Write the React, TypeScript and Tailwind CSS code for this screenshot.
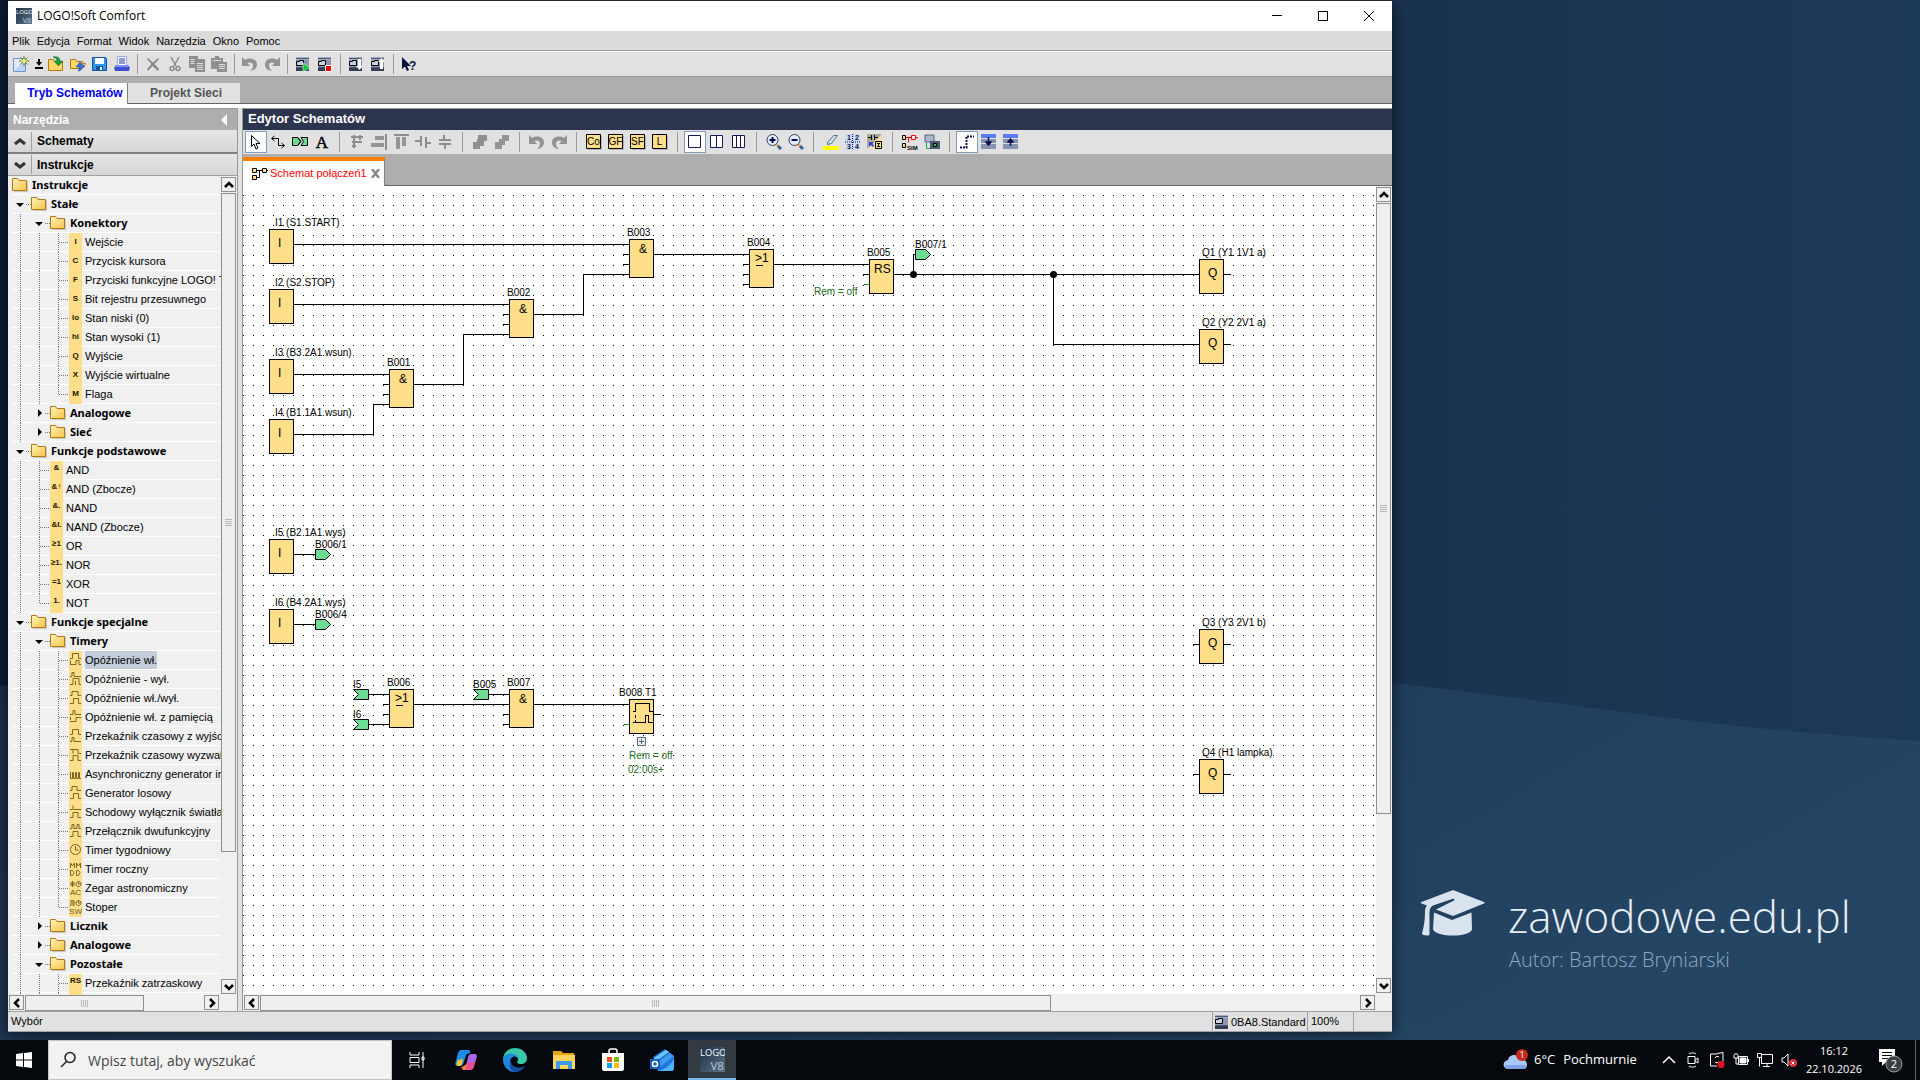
import type { ReactNode } from 'react'

// ─── Icons (16x16 grid) ───────────────────────────────────────────────────────
const Folder = () => (
  <svg width="16" height="15" viewBox="0 0 16 15" className="shrink-0" aria-hidden>
    <path d="M2 3h14v11H2z" fill="#c9c9c9" />
    <path d="M.5 12.500V.5h5l1.500 2h7.500v10z" fill="url(#folderFill)" stroke="#b07a10" />
  </svg>
)

const deviceBody = (
  <>
    <path d="M1 1h13v14H1z" fill="#4d5972" />
    <path d="M1 1h13v1H1zM1 3h13v1H1z" fill="#a4aec4" />
    <path d="M1 4h13v7H1z" fill="#8b96ae" />
    <path d="M1 12h13v3H1z" fill="#343d52" />
    <path d="M1.500 5.500h3v-1h4v5h-7z" fill="#c7cfdf" stroke="#000" />
  </>
)

const undoPath = 'M0 1v9h8L5.500 7c3-1.500 6 0 5.500 3.500-.2 1.500-1.500 3-3 4.500 4-.5 7-3 7-6.500C15 3 8 1 3 4z'

const codeBox = (text: string) => (
  <>
    <path d="M2 2h14v14H2z" fill="#b5b5b5" />
    <path d="M.5.5h14v14H.5z" fill="#ffde8a" stroke="#000" />
    <text x="7.500" y="11" fontSize="10" textAnchor="middle" fontFamily="Liberation Sans, sans-serif">{text}</text>
  </>
)

const ICONS: Record<string, ReactNode> = {
  new: (
    <>
      <path d="M.5 2.500h12v13H.5z" fill="#dfe9fb" stroke="#6f93d0" />
      <path d="M2 14 12 4v11H2z" fill="#bcd2f5" />
      <path d="M11 0v10M6 5h10M7.500 1.500l7 7M14.500 1.500l-7 7" stroke="#5d7a2e" />
      <path d="M11 2l1 2 2 1-2 1-1 2-1-2-2-1 2-1z" fill="#ffff5a" />
    </>
  ),
  open: (
    <>
      <path d="M.5 14.500v-11h5l1 2h8v9z" fill="#ffd867" stroke="#b07a10" />
      <path d="M5 1c5-1 7 1 7 4h3l-4.500 5L6 5h3C9 3 8 2 5 1z" fill="#1c9a38" stroke="#0f6f25" strokeWidth=".5" />
    </>
  ),
  folderUp: (
    <>
      <path d="M.5 12.500v-9h5l1 2h6v2h3l-3 5z" fill="#ffd867" stroke="#b07a10" />
      <path d="M10 6l5 5h-3c0 3-2 4-4 4 1-1 1-2 1-4H6z" fill="#3a67e0" stroke="#2348b5" strokeWidth=".5" />
    </>
  ),
  save: (
    <>
      <path d="M.5 1.500h13l1 1v12H.5z" fill="#2f95e8" stroke="#124ea3" />
      <path d="M3 2h9v6H3z" fill="#f4fbff" />
      <path d="M4 10h7v5H4z" fill="#0f55a0" />
      <path d="M8 11h2v3H8z" fill="#fff" />
    </>
  ),
  print: (
    <>
      <path d="M3.500.5h9v9h-9z" fill="#fff" stroke="#9aa4d8" />
      <path d="M5 3h6M5 5h6M5 7h6" stroke="#2434a0" />
      <path d="M1 9h14v3H1z" fill="#7d92f0" />
      <path d="M0 11h16l-1 4H1z" fill="#3b4fd0" />
    </>
  ),
  close: <path d="M3 2l5 4.500L13 2l1 1-4.500 5 4.500 5-1 2-5.500-5L3 15l-1-2 4.500-5L2 3z" fill="#8a8a8a" />,
  cut: (
    <>
      <path d="M4 1l5 9M12 1l-5 9" stroke="#8a8a8a" strokeWidth="1.500" />
      <circle cx="5" cy="12.500" r="2" fill="none" stroke="#8a8a8a" strokeWidth="1.500" />
      <circle cx="11" cy="12.500" r="2" fill="none" stroke="#8a8a8a" strokeWidth="1.500" />
    </>
  ),
  copy: (
    <>
      <path d="M0 0h9v12H0zM6 3h10v13H6z" fill="#8f8f8f" />
      <path d="M1.500 3.500h4M1.500 5.500h4M1.500 7.500h4M8 7.500h6M8 9.500h6M8 11.500h6M8 13.500h6" stroke="#dedede" />
    </>
  ),
  paste: (
    <>
      <path d="M0 2h4V0h4v2h4v11H0zM6 6h10v10H6z" fill="#8f8f8f" />
      <path d="M2 4.500h8M8 8.500h6M8 10.500h6M8 12.500h6" stroke="#dedede" />
    </>
  ),
  undo: <path d={undoPath} fill="#929292" />,
  redo: <path d={undoPath} fill="#929292" transform="matrix(-1 0 0 1 16 0)" />,
  start: <>{deviceBody}<path d="M8 7l7 4.500L8 16z" fill="#0fc93f" stroke="#fff" strokeWidth=".5" /></>,
  stop: <>{deviceBody}<path d="M8.500 9.500h6v6h-6z" fill="#f00" stroke="#fff" /></>,
  download: <>{deviceBody}<path d="M10 3h3v7h2l-3.500 4L8 10h2z" fill="#fff" /></>,
  upload: <>{deviceBody}<path d="M10 13h3V6h2l-3.500-4L8 6h2z" fill="#fff" /></>,
  help: (
    <>
      <path d="M1 1v12l3-2.500L6 15l2-1-2-4h4z" fill="#0a0f3c" />
      <text x="8" y="14" fontSize="12" fontWeight="700" fill="#0a0f3c" fontFamily="Liberation Sans, sans-serif">?</text>
    </>
  ),
  pointer: <path d="M3.500 1.500v11l2.500-2.500 2 5 2-1-2-4.500h4z" fill="#fff" stroke="#000" />,
  link: <path d="M2 4.500h6.500v7H14M4.500 2L1.500 4.500l3 2.500M11.500 9l3 2.500-3 2.500" fill="none" stroke="#000" />,
  cutLink: (
    <>
      <path d="M.5 3.500h5l3 4-3 4h-5zM9 3.500h6.500v8H9l2.500-4z" fill="#6cdc92" stroke="#000" />
      <path d="M6 3.500l3 4-3 4" fill="none" stroke="#000" />
    </>
  ),
  text: <text x="8" y="14" fontSize="17" textAnchor="middle" stroke="#000" strokeWidth=".5" fontFamily="Liberation Serif, serif">A</text>,
  alignLeft: <path d="M2 3h12M3 8h10M5 1v13M3 12h4M11 1v5" stroke="#8d8d8d" strokeWidth="2" />,
  alignRight: <path d="M15 0v15" stroke="#8d8d8d" strokeWidth="2" />,
  alignTop: (
    <>
      <path d="M1 1h15" stroke="#8d8d8d" strokeWidth="2" />
      <path d="M3 3h4v12H3zM9 3h4v9H9z" fill="#959595" />
    </>
  ),
  spaceH: <path d="M0 7h6M11 9h5M6 2v10M11 3v11" stroke="#8d8d8d" strokeWidth="2" />,
  spaceV: <path d="M7 1v5M8 10v5M2 6h12M2 10h12" stroke="#8d8d8d" strokeWidth="2" />,
  front: <path d="M6 1h9v6h-3v5H8v3H1V8h4V5h1z" fill="#8f8f8f" />,
  back: <path d="M8 1h7v6h-4v4H8v4H1V8h4V5h3z" fill="#959595" />,
  co: codeBox('Co'),
  gf: codeBox('GF'),
  sf: codeBox('SF'),
  l: codeBox('L'),
  win1: <path d="M1.500 1.500h12v12h-12z" fill="#fff" stroke="#1a1a50" />,
  win2: <path d="M1.500 1.500h12v12h-12zM7.500 1.500v12" fill="#fff" stroke="#1a1a50" />,
  win3: <path d="M1.500 1.500h12v12h-12zM5.500 1.500v12M9.500 1.500v12" fill="#fff" stroke="#1a1a50" />,
  zoomIn: (
    <>
      <path d="M10 10l2 2" stroke="#e8a33a" strokeWidth="2.500" />
      <path d="M12 12l3 3" stroke="#34609f" strokeWidth="3" />
      <circle cx="6.500" cy="6" r="5.500" fill="#e4ebf8" stroke="#3a3a66" />
      <path d="M6.500 3v6M3.500 6h6" stroke="#0a0f50" strokeWidth="2" />
    </>
  ),
  zoomOut: (
    <>
      <path d="M10 10l2 2" stroke="#e8a33a" strokeWidth="2.500" />
      <path d="M12 12l3 3" stroke="#34609f" strokeWidth="3" />
      <circle cx="6.500" cy="6" r="5.500" fill="#e4ebf8" stroke="#3a3a66" />
      <path d="M3.500 6h6" stroke="#0a0f50" strokeWidth="2" />
    </>
  ),
  marker: (
    <>
      <path d="M0 12h16v4H0z" fill="#ff0" />
      <path d="M4.500 8.500l6-7h4l-6 8-4 1z" fill="#cfe0ee" stroke="#5a6f80" />
    </>
  ),
  pages: (
    <>
      <path d="M0 0h15v16H0z" fill="#cbdcf8" />
      <path d="M7.500 0v16M0 8h15" stroke="#101040" strokeDasharray="1 1" />
      <g fontSize="7" fontWeight="700" fill="#101040" fontFamily="Liberation Sans, sans-serif">
        <text x="2" y="6">1</text>
        <text x="10" y="6">2</text>
        <text x="2" y="15">3</text>
        <text x="10" y="15">4</text>
      </g>
    </>
  ),
  convert: (
    <>
      <path d="M0 0h15v15H0z" fill="#f6dcae" />
      <path d="M0 0h15L0 15z" fill="#a9aa98" />
      <path d="M1 3.500h3M4.500 1v5M7.500 1v5M8 3.500h3" stroke="#000" />
      <path d="M8.500 7.500h6v7h-6zM10 9.500h3M11.500 9.500v3M10 12.500h3" fill="#ffde8a" stroke="#000" />
      <path d="M2 8h5L5.500 9.500 7 12l-1 1-2-2-2 2z" fill="#3044e0" />
    </>
  ),
  sim: (
    <>
      <path d="M.5 1.500h3v4h-3zM.5 9.500h3v4h-3z" fill="#ffde8a" stroke="#000" />
      <path d="M4 3.500h5M6.500 3.500v5M9.500 1.500h4v4h-4zM13.500 3.500H16" fill="#fff" stroke="#f00" />
      <text x="5" y="16" fontSize="6" fontWeight="700" fontFamily="Liberation Sans, sans-serif">SIM</text>
    </>
  ),
  online: (
    <>
      <path d="M1 1h9v7H1z" fill="#a9b6cc" stroke="#56627a" />
      <path d="M6 7h10v8H6z" fill="#4c5872" />
      <path d="M9.500 9.500h3v3h-3z" fill="#0fd93f" stroke="#000" />
      <path d="M2.500 9v5.500H6" stroke="#12a53a" fill="none" />
    </>
  ),
  steps: <path d="M1 13.500h6.500v-11H15" fill="none" stroke="#0a0f50" strokeWidth="2" strokeDasharray="2 1" />,
  rowDown: (
    <>
      <path d="M0 0h15v4H0z" fill="#5d7bf0" />
      <path d="M0 5h15v4H0zM0 10h15v5H0z" fill="#8793b0" />
      <path d="M7.500 3v6M5 8h5l-2.500 3z" stroke="#0a0f50" fill="#0a0f50" strokeWidth="1.500" />
    </>
  ),
  rowUp: (
    <>
      <path d="M0 0h15v4H0z" fill="#5d7bf0" />
      <path d="M0 5h15v4H0zM0 10h15v5H0z" fill="#8793b0" />
      <path d="M7.500 12V6M5 8h5L7.500 5z" stroke="#0a0f50" fill="#0a0f50" strokeWidth="1.500" />
    </>
  ),
}

ICONS.alignRight = (
  <>
    <path d="M14 0h2v16h-2z" fill="#8d8d8d" />
    <path d="M4 2h9v4H4zM0 9h13v4H0z" fill="#959595" />
  </>
)

function LogoMark({ size }: { size: number }) {
  return (
    <svg width={size} height={size} viewBox="0 0 24 24" aria-hidden className="shrink-0">
      <rect width="24" height="24" fill="url(#logoFill)" />
      <g fontFamily="Open Sans, sans-serif">
        <text x="0" y="9" fontSize="9" fill="#fff">LOGO</text>
        <text x="10" y="22" fontSize="11" fill="#b9c7d3">V8</text>
      </g>
    </svg>
  )
}

// ─── Toolbars ─────────────────────────────────────────────────────────────────
type Tool = { icon: string; label: string; active?: boolean }

const FILE_TOOLS: Tool[][] = [
  [
    { icon: 'open', label: 'Otwórz' },
    { icon: 'folderUp', label: 'Zamknij' },
    { icon: 'save', label: 'Zapisz' },
    { icon: 'print', label: 'Drukuj' },
  ],
  [
    { icon: 'close', label: 'Usuń' },
    { icon: 'cut', label: 'Wytnij' },
    { icon: 'copy', label: 'Kopiuj' },
    { icon: 'paste', label: 'Wklej' },
  ],
  [
    { icon: 'undo', label: 'Cofnij' },
    { icon: 'redo', label: 'Ponów' },
  ],
  [
    { icon: 'start', label: 'Uruchom LOGO!' },
    { icon: 'stop', label: 'Zatrzymaj LOGO!' },
  ],
  [
    { icon: 'download', label: 'PC do LOGO!' },
    { icon: 'upload', label: 'LOGO! do PC' },
  ],
  [{ icon: 'help', label: 'Pomoc kontekstowa' }],
]

const EDITOR_TOOLS: Tool[][] = [
  [
    { icon: 'pointer', label: 'Wybór', active: true },
    { icon: 'link', label: 'Połącz' },
    { icon: 'cutLink', label: 'Rozetnij połączenie' },
    { icon: 'text', label: 'Tekst' },
  ],
  [
    { icon: 'alignLeft', label: 'Wyrównaj automatycznie' },
    { icon: 'alignRight', label: 'Wyrównaj w pionie' },
    { icon: 'alignTop', label: 'Wyrównaj w poziomie' },
    { icon: 'spaceH', label: 'Rozmieść w poziomie' },
    { icon: 'spaceV', label: 'Rozmieść w pionie' },
  ],
  [
    { icon: 'front', label: 'Na wierzch' },
    { icon: 'back', label: 'Na spód' },
  ],
  [
    { icon: 'undo', label: 'Cofnij' },
    { icon: 'redo', label: 'Ponów' },
  ],
  [
    { icon: 'co', label: 'Stałe' },
    { icon: 'gf', label: 'Funkcje podstawowe' },
    { icon: 'sf', label: 'Funkcje specjalne' },
    { icon: 'l', label: 'Rejestrowanie' },
  ],
  [
    { icon: 'win1', label: 'Jedno okno', active: true },
    { icon: 'win2', label: 'Dwa okna' },
    { icon: 'win3', label: 'Trzy okna' },
  ],
  [
    { icon: 'zoomIn', label: 'Powiększ' },
    { icon: 'zoomOut', label: 'Pomniejsz' },
  ],
  [
    { icon: 'marker', label: 'Zaznacz' },
    { icon: 'pages', label: 'Układ stron' },
    { icon: 'convert', label: 'Konwertuj' },
  ],
  [
    { icon: 'sim', label: 'Symulacja' },
    { icon: 'online', label: 'Test online' },
  ],
  [
    { icon: 'steps', label: 'Linie', active: true },
    { icon: 'rowDown', label: 'Rozwiń' },
    { icon: 'rowUp', label: 'Zwiń' },
  ],
]

function ToolButton({ icon, label, active }: Tool) {
  return (
    <button
      aria-label={label}
      className={
        active
          ? 'flex h-[22px] w-[22px] shrink-0 items-center justify-center border border-[#7f9db9] bg-white'
          : 'flex h-[22px] w-[22px] shrink-0 items-center justify-center'
      }
    >
      <svg width="16" height="16" viewBox="0 0 16 16" aria-hidden>{ICONS[icon]}</svg>
    </button>
  )
}

function ToolGroups({ groups, sep }: { groups: Tool[][]; sep: string }) {
  return (
    <>
      {groups.map((group, i) => (
        <div key={i} className="flex items-center">
          {i > 0 && (
            <div className={sep}>
              <div className="h-5 w-px bg-[#9a9a9a]" />
            </div>
          )}
          {group.map((t) => <ToolButton key={t.icon} {...t} />)}
        </div>
      ))}
    </>
  )
}

// ─── Scroll bars ──────────────────────────────────────────────────────────────
const CHEVRONS = {
  up: 'M3 9l4-4 4 4',
  down: 'M3 5l4 4 4-4',
  left: 'M9 3L5 7l4 4',
  right: 'M5 3l4 4-4 4',
}

function ScrollButton({ dir }: { dir: keyof typeof CHEVRONS }) {
  return (
    <button aria-label={`Przewiń: ${dir}`} className="flex h-[15px] w-[15px] shrink-0 items-center justify-center border border-[#8f8f8f] bg-[#f0f0f0]">
      <svg width="14" height="14" viewBox="0 0 14 14" aria-hidden className="shrink-0">
        <path d={CHEVRONS[dir]} fill="none" stroke="#000" strokeWidth="2.500" />
      </svg>
    </button>
  )
}

function VScroll({ thumb }: { thumb: string }) {
  return (
    <div className="flex w-4 shrink-0 flex-col justify-between gap-px bg-[#f0f0f0] py-px">
      <ScrollButton dir="up" />
      <div className="min-h-0 w-[15px] flex-1">
        <div className={`flex items-center justify-center border border-[#8f8f8f] bg-[#efefef] ${thumb}`}>
          <div className="flex flex-col gap-px">
            {[0, 1, 2, 3].map((n) => <div key={n} className="h-px w-[7px] bg-[#b9b9b9]" />)}
          </div>
        </div>
      </div>
      <ScrollButton dir="down" />
    </div>
  )
}

function HScroll({ thumb }: { thumb: string }) {
  return (
    <div className="flex h-4 min-w-0 flex-1 items-start gap-px bg-[#f0f0f0] pr-px">
      <ScrollButton dir="left" />
      <div className="h-full min-w-0 flex-1">
        <div className={`flex h-full items-center justify-center border border-[#8f8f8f] bg-[#efefef] ${thumb}`}>
          <div className="flex gap-px">
            {[0, 1, 2, 3].map((n) => <div key={n} className="h-[7px] w-px bg-[#b9b9b9]" />)}
          </div>
        </div>
      </div>
      <ScrollButton dir="right" />
    </div>
  )
}

// ─── Instruction tree ─────────────────────────────────────────────────────────
type Row = { label: string; depth: number; folder?: 'open' | 'closed' | 'root'; glyph?: string; art?: string; last?: boolean; selected?: boolean }

const ROWS: Row[] = [
  { label: 'Instrukcje', depth: 0, folder: 'root' },
  { label: 'Stałe', depth: 1, folder: 'open' },
  { label: 'Konektory', depth: 2, folder: 'open' },
  { label: 'Wejście', depth: 3, glyph: 'I' },
  { label: 'Przycisk kursora', depth: 3, glyph: 'C' },
  { label: 'Przyciski funkcyjne LOGO! TDE', depth: 3, glyph: 'F' },
  { label: 'Bit rejestru przesuwnego', depth: 3, glyph: 'S' },
  { label: 'Stan niski (0)', depth: 3, glyph: 'lo' },
  { label: 'Stan wysoki (1)', depth: 3, glyph: 'hi' },
  { label: 'Wyjście', depth: 3, glyph: 'Q' },
  { label: 'Wyjście wirtualne', depth: 3, glyph: 'X' },
  { label: 'Flaga', depth: 3, glyph: 'M', last: true },
  { label: 'Analogowe', depth: 2, folder: 'closed' },
  { label: 'Sieć', depth: 2, folder: 'closed' },
  { label: 'Funkcje podstawowe', depth: 1, folder: 'open' },
  { label: 'AND', depth: 2, glyph: '&' },
  { label: 'AND (Zbocze)', depth: 2, glyph: '&↑' },
  { label: 'NAND', depth: 2, glyph: '&.' },
  { label: 'NAND (Zbocze)', depth: 2, glyph: '&I.' },
  { label: 'OR', depth: 2, glyph: '≥1' },
  { label: 'NOR', depth: 2, glyph: '≥1.' },
  { label: 'XOR', depth: 2, glyph: '=1' },
  { label: 'NOT', depth: 2, glyph: '1.', last: true },
  { label: 'Funkcje specjalne', depth: 1, folder: 'open' },
  { label: 'Timery', depth: 2, folder: 'open' },
  { label: 'Opóźnienie wł.', depth: 3, art: 'M1 7.500h2.500v-5h6v5H12M1.500 9.500v4M1 13.500h6v-4h3v4h2', selected: true },
  { label: 'Opóźnienie - wył.', depth: 3, art: 'M1 6.500h2v-4h2v4h7M1 14.500h3v-6h6v6h2M6.500 11v4' },
  { label: 'Opóźnienie wł./wył.', depth: 3, art: 'M1 6.500h2v-4h6v4h3M1 14.500h3.500v-5h5v5H12' },
  { label: 'Opóźnienie wł. z pamięcią', depth: 3, art: 'M1 6.500h3v-4h2v4h6M1 13.500h6v-4h5M1.500 9v3' },
  { label: 'Przekaźnik czasowy z wyjściem', depth: 3, art: 'M1 7.500h2.500v-5h6v5H12M1 14.500h2v-4h2v4h7' },
  { label: 'Przekaźnik czasowy wyzwalany', depth: 3, art: 'M1 3.500h3v4M4 3.500h5v4h3M1 14.500h3v-5h5v5h3' },
  { label: 'Asynchroniczny generator impulsów', depth: 3, art: 'M1.500 7v6.500h2V7.500h1v6h2v-6h1v6h2v-6h1v6H12' },
  { label: 'Generator losowy', depth: 3, art: 'M1 6.500h2v-4h5v4h4M1 14.500h3.500v-5h5v5H12' },
  { label: 'Schodowy wyłącznik światła', depth: 3, art: 'M1 6.500h3v-4M5 6.500h7M1 14.500h3v-5h5v5h3' },
  { label: 'Przełącznik dwufunkcyjny', depth: 3, art: 'M1 6.500h2v-4h2v4h3v-4h2v4h2M1 14.500h3v-5h5v5h3' },
  { label: 'Timer tygodniowy', depth: 3, art: 'M6.500 3.500a5 5 0 1 0 .01 0M6.500 5v4h3' },
  { label: 'Timer roczny', depth: 3, art: 'M1.500 8V3l2 3 2-3v5M7.500 8V3l2 3 2-3v5M1.500 10.500h2l1.500 2-1.500 3h-2zM7.500 10.500h2l1.500 2-1.500 3h-2z' },
  { label: 'Zegar astronomiczny', depth: 3, glyph: '/AC', art: 'M3.500 2v6M1 5h5M1.500 3l4 4M5.500 3l-4 4M9.500 2.500a2.500 2.500 0 1 0 .01 0M9.500 3v2h2' },
  { label: 'Stoper', depth: 3, glyph: '/SW', art: 'M1 7.500h1v-5h2v5h1v-5M9.500 2.500a2.500 2.500 0 1 0 .01 0M9.500 3v2h2', last: true },
  { label: 'Licznik', depth: 2, folder: 'closed' },
  { label: 'Analogowe', depth: 2, folder: 'closed' },
  { label: 'Pozostałe', depth: 2, folder: 'open' },
  { label: 'Przekaźnik zatrzaskowy', depth: 3, glyph: 'RS' },
  { label: '', depth: 3, glyph: '' },
]

function LeafIcon({ glyph = '', art }: { glyph?: string; art?: string }) {
  const lower = glyph.startsWith('/')
  return (
    <svg width="13" height="19" viewBox="0 0 13 19" className="shrink-0 self-start" aria-hidden>
      <rect width="13" height="19" fill="#ffde8a" />
      {art && <path d={art} fill="none" stroke="#7d6526" />}
      {glyph && (
        <text
          x="6.500"
          y={lower ? 16 : glyph.match(/[&1R]/) ? 9 : 11}
          fontSize="8"
          textAnchor="middle"
          fontWeight={lower ? 400 : 700}
          fill={lower ? '#6b5620' : '#1c1600'}
          fontFamily="Liberation Sans, DejaVu Sans, sans-serif"
        >
          {glyph.replace('/', '')}
        </text>
      )}
    </svg>
  )
}

function Guides({ row }: { row: Row }) {
  const cells = []
  for (let i = 0; i < row.depth; i++) {
    const own = i === row.depth - 1
    let mark = <path d="M8.500 0v19" stroke="#777" strokeDasharray="1 1" />
    if (own && row.folder) {
      mark = (
        <>
          <path d={row.folder === 'open' ? 'M4 8h8l-4 4z' : 'M7 5v8l4-4z'} fill="#000" />
          <path d="M14 9.500h5" stroke="#777" strokeDasharray="1 1" />
        </>
      )
    } else if (own) {
      mark = <path d={row.last ? 'M8.500 0v9.500H19' : 'M8.500 0v19M9 9.500h10'} fill="none" stroke="#777" strokeDasharray="1 1" />
    }
    cells.push(<svg key={i} width="19" height="19" viewBox="0 0 19 19" className="shrink-0 self-start" aria-hidden>{mark}</svg>)
  }
  return <>{cells}</>
}

function Tree() {
  return (
    <ul role="tree" className="ml-1 min-w-0 flex-1 overflow-hidden">
      {ROWS.map((row, i) => (
        <li key={i} role="treeitem" aria-selected={!!row.selected} className="flex h-[19px] items-center border-b border-white whitespace-nowrap">
          <Guides row={row} />
          {row.folder ? <Folder /> : <LeafIcon glyph={row.glyph} art={row.art} />}
          <span
            className={
              row.folder
                ? 'ml-1 font-["Noto_Sans"] text-[11px] font-bold leading-[18px]'
                : row.selected
                  ? 'ml-[3px] bg-[#c3cdd9] leading-[18px]'
                  : 'ml-[3px] leading-[18px]'
            }
          >
            {row.label}
          </span>
        </li>
      ))}
    </ul>
  )
}

function ToolsPanel() {
  return (
    <aside className="flex w-[230px] shrink-0 flex-col border-r border-[#999]">
      <div className="flex h-[22px] items-center justify-between border-t border-[#999] bg-[#aeaeae] pl-[5px] pr-[10px] text-[12px] font-bold text-white">
        Narzędzia
        <svg width="6" height="12" viewBox="0 0 6 12" aria-hidden><path d="M6 0v12L0 6z" fill="#fff" /></svg>
      </div>
      {['Schematy', 'Instrukcje'].map((name, i) => (
        <button
          key={name}
          className={
            i === 0
              ? 'flex h-6 w-full items-center border-b-2 border-[#808080] bg-linear-to-b from-[#e6e6e6] to-[#d6d6d6] text-[12px] font-bold'
              : 'flex h-[22px] w-full items-center border-b border-[#a0a0a0] bg-linear-to-b from-[#e6e6e6] to-[#d6d6d6] text-[12px] font-bold'
          }
        >
          <span className="flex w-6 justify-center border-r border-[#a0a0a0]">
            <svg width="12" height="19" viewBox="0 0 12 19" aria-hidden>
              <path d={i === 0 ? 'M1 12l5-4 5 4' : 'M1 8l5 4 5-4'} fill="none" stroke="#333" strokeWidth="3" />
            </svg>
          </span>
          <span className="ml-[5px]">{name}</span>
        </button>
      ))}
      <div className="flex min-h-0 flex-1">
        <Tree />
        <VScroll thumb="h-[84%]" />
      </div>
      <div className="flex pl-px pr-[17px]">
        <HScroll thumb="w-[67%]" />
      </div>
    </aside>
  )
}

// ─── Diagram ──────────────────────────────────────────────────────────────────
type Block = { x: number; y: number; kind: 'I' | 'Q' | '&' | '≥1' | 'RS' | 'T'; label: string; stubs?: number[]; out?: boolean }

const BLOCKS: Block[] = [
  { x: 26, y: 43, kind: 'I', label: 'I1 (S1 START)' },
  { x: 26, y: 103, kind: 'I', label: 'I2 (S2 STOP)' },
  { x: 26, y: 173, kind: 'I', label: 'I3 (B3 2A1 wsun)' },
  { x: 26, y: 233, kind: 'I', label: 'I4 (B1 1A1 wsun)' },
  { x: 26, y: 353, kind: 'I', label: 'I5 (B2 1A1 wys)' },
  { x: 26, y: 423, kind: 'I', label: 'I6 (B4 2A1 wys)' },
  { x: 146, y: 183, kind: '&', label: 'B001', stubs: [15, 25] },
  { x: 266, y: 113, kind: '&', label: 'B002', stubs: [15, 25] },
  { x: 386, y: 53, kind: '&', label: 'B003', stubs: [15, 25] },
  { x: 506, y: 63, kind: '≥1', label: 'B004', stubs: [15, 25, 35] },
  { x: 626, y: 73, kind: 'RS', label: 'B005', stubs: [15] },
  { x: 146, y: 503, kind: '≥1', label: 'B006', stubs: [15, 25] },
  { x: 266, y: 503, kind: '&', label: 'B007', stubs: [25, 35] },
  { x: 386, y: 513, kind: 'T', label: 'B008 T1', out: true },
  { x: 956, y: 73, kind: 'Q', label: 'Q1 (Y1 1V1 a)', out: true },
  { x: 956, y: 143, kind: 'Q', label: 'Q2 (Y2 2V1 a)', out: true },
  { x: 956, y: 443, kind: 'Q', label: 'Q3 (Y3 2V1 b)', stubs: [15], out: true },
  { x: 956, y: 573, kind: 'Q', label: 'Q4 (H1 lampka)', stubs: [15], out: true },
]

const WIRES = [
  'M49 58H386',
  'M49 118H266',
  'M49 188H146',
  'M49 248H130V218H146',
  'M169 198H220V148H266',
  'M289 128H340V88H386',
  'M409 68H506',
  'M529 78H626',
  'M649 88H956',
  'M670 88V68H672',
  'M810 88V158H956',
  'M49 368H72',
  'M49 438H72',
  'M124 508H146',
  'M124 538H146',
  'M169 518H266',
  'M244 508H266',
  'M289 518H386',
]

const OUT_TAGS = [
  { x: 672, y: 63, label: 'B007/1' },
  { x: 72, y: 363, label: 'B006/1' },
  { x: 72, y: 433, label: 'B006/4' },
]

const IN_TAGS = [
  { x: 110, y: 503, label: 'I5' },
  { x: 110, y: 533, label: 'I6' },
  { x: 230, y: 503, label: 'B005' },
]

const LABEL_DX = { I: 6, Q: 3, '&': -2, '≥1': -2, RS: -2, T: -10 }

function BlockNode({ x, y, kind, label, stubs = [], out }: Block) {
  const tall = kind === '&' || kind === '≥1'
  return (
    <g>
      <g transform={`translate(${x + 0.5} ${y + 0.5})`} fill="none" stroke="#000" shapeRendering="crispEdges">
        <rect width="24" height={tall ? 38 : 34} fill="#ffde8a" />
        {stubs.map((s) => <path key={s} d={`M-6 ${s + 1}v-1h6`} />)}
        {out && <path d="M24 15h7" />}
        {(kind === 'RS' || kind === 'T') && <path d="M-6 25h6" stroke="#1f8a2a" />}
        {kind === '≥1' && <path d="M6 16h7" />}
        {kind === 'T' && <path d="M3 12h3V4h14v8h3M3 23h13v-7h3v7h4M6 15v3M6 20v3" />}
      </g>
      <text x={x + LABEL_DX[kind]} y={y - 3}>{label}</text>
      <g fontSize="12">
        {kind === 'I' && <text x={x + 9} y={y + 18}>I</text>}
        {kind === 'Q' && <text x={x + 9} y={y + 18}>Q</text>}
        {kind === '&' && <text x={x + 10} y={y + 14}>&amp;</text>}
        {kind === '≥1' && <text x={x + 6} y={y + 13}>&gt;1</text>}
        {kind === 'RS' && <text x={x + 5} y={y + 14}>RS</text>}
      </g>
    </g>
  )
}

function Diagram() {
  return (
    <svg className="min-w-0 flex-1 bg-white" fontFamily="Liberation Sans, Arial, sans-serif" fontSize="10" role="img" aria-label="Schemat połączeń1">
      <defs>
        <pattern id="grid" width="10" height="10" patternUnits="userSpaceOnUse">
          <rect y="9" width="1" height="1" fill="#000" />
        </pattern>
      </defs>
      <rect width="100%" height="100%" fill="url(#grid)" />
      <g transform="translate(.5 .5)" fill="none" stroke="#000" shapeRendering="crispEdges">
        {WIRES.map((d) => <path key={d} d={d} />)}
      </g>
      <circle cx="670.500" cy="88.500" r="3.500" />
      <circle cx="810.500" cy="88.500" r="3.500" />
      {BLOCKS.map((b) => <BlockNode key={b.label} {...b} />)}
      {OUT_TAGS.map((t) => (
        <g key={t.label}>
          <path d={`M${t.x + 0.5} ${t.y + 0.5}h10l5 5-5 5h-10z`} fill="#6cdc92" stroke="#000" />
          <text x={t.x} y={t.y - 1}>{t.label}</text>
        </g>
      ))}
      {IN_TAGS.map((t) => (
        <g key={t.label}>
          <path d={`M${t.x + 0.5} ${t.y + 0.5}h15v10h-15l5-5z`} fill="#6cdc92" stroke="#000" />
          <text x={t.x} y={t.y - 1}>{t.label}</text>
        </g>
      ))}
      <g fill="#1e6b1e">
        <text x="571" y="109">Rem = off</text>
        <text x="386" y="573">Rem = off</text>
        <text x="385" y="587">02:00s+</text>
      </g>
      <path d="M394.500 551.500h8v8h-8zM396 555.500h5M398.500 553v5" fill="#e9edf3" stroke="#5a6575" />
    </svg>
  )
}

function EditorPanel() {
  return (
    <section className="flex min-w-0 flex-1 flex-col">
      <h2 className="h-[22px] border-t border-[#999] bg-[#2d344d] pl-[5px] text-[13px] font-bold leading-5 text-white">
        Edytor Schematów
      </h2>
      <div className="flex h-6 items-center bg-[#e1e1e1] pl-[2px]">
        <ToolGroups groups={EDITOR_TOOLS} sep="flex w-[13px] justify-center" />
      </div>
      <div className="flex h-8 items-end border-b border-[#666] bg-[#aeaeae]">
        <div className="-mb-px flex h-[29px] w-[142px] items-center border-r border-t-4 border-r-[#808080] border-t-[#ff7f00] bg-white pb-px pl-[9px]">
          <svg width="16" height="13" viewBox="0 0 16 13" aria-hidden className="shrink-0">
            <path d="M4 3.500h6M7.500 3.500v7H4M14 3.500h2" stroke="#000" fill="none" />
            <path d="M.5 1.500h4v4h-4zM.5 8.500h4v4h-4zM10.500 1.500h4v4h-4z" fill="#ffde8a" stroke="#000" />
          </svg>
          <span className="ml-[2px] whitespace-nowrap text-[11px] text-[#f00]">Schemat połączeń1</span>
          <button aria-label="Zamknij kartę" className="ml-auto mr-1">
            <svg width="9" height="9" viewBox="0 0 9 9" aria-hidden><path d="M1 0l7 9M8 0L1 9" stroke="#8a8a8a" strokeWidth="2.500" /></svg>
          </button>
        </div>
      </div>
      <div className="flex min-h-0 flex-1">
        <Diagram />
        <VScroll thumb="h-[79%]" />
      </div>
      <div className="mt-px flex pl-px pr-4">
        <HScroll thumb="w-[72%]" />
      </div>
    </section>
  )
}

// ─── Application window ───────────────────────────────────────────────────────
function AppWindow() {
  return (
    <main className="mb-2 ml-2 flex min-w-0 flex-1 flex-col border-t border-[#20242c] bg-[#f0f0f0] text-[11px] text-black shadow-[0_2px_14px_rgba(0,0,0,0.6)]">
      <header className="flex h-[30px] shrink-0 items-center bg-white pl-2">
        <LogoMark size={16} />
        <h1 className="ml-[5px] font-['Open_Sans'] text-[12px]">LOGO!Soft Comfort</h1>
        <div className="ml-auto flex">
          {[
            { label: 'Minimalizuj', d: 'M1 5.500h10' },
            { label: 'Maksymalizuj', d: 'M1.500 1.500h9v9h-9z' },
            { label: 'Zamknij', d: 'M1 1l10 10M11 1L1 11' },
          ].map((b) => (
            <button key={b.label} aria-label={b.label} className="flex h-7 w-[46px] items-center justify-center">
              <svg width="12" height="12" viewBox="0 0 12 12" aria-hidden><path d={b.d} fill="none" stroke="#000" /></svg>
            </button>
          ))}
        </div>
      </header>
      <nav className="flex h-5 shrink-0 items-center gap-[7px] border-b border-[#999] bg-[#dcdcdc] pl-1 pt-px">
        {['Plik', 'Edycja', 'Format', 'Widok', 'Narzędzia', 'Okno', 'Pomoc'].map((m) => <button key={m}>{m}</button>)}
      </nav>
      <div className="flex h-[26px] shrink-0 items-center border-b border-t border-b-[#999] border-t-white bg-[#e1e1e1] pl-[2px]">
        <ToolButton icon="new" label="Nowy" />
        <button aria-label="Nowy: więcej" className="flex w-[13px] justify-center">
          <svg width="8" height="11" viewBox="0 0 8 11" aria-hidden><path d="M3 0h2v3h2L4 7 1 3h2zM0 8h8v2H0z" /></svg>
        </button>
        <ToolGroups groups={FILE_TOOLS} sep="flex w-[9px] justify-center" />
      </div>
      <div className="flex h-[27px] shrink-0 items-end border-b border-[#666] bg-[#aeaeae] pl-[7px] text-[12px] font-bold">
        <button className="-mb-px h-[21px] w-[113px] border-r border-[#808080] bg-white pb-[2px] pl-2 text-[#0000f0]">Tryb Schematów</button>
        <button className="h-5 w-28 bg-[#e1e1e1] pb-px pl-1 text-[#555]">Projekt Sieci</button>
      </div>
      <div className="flex min-h-0 flex-1 border-t-4 border-white">
        <ToolsPanel />
        <div className="w-[5px] shrink-0 border-r border-[#999] bg-[#e1e1e1]" />
        <EditorPanel />
      </div>
      <footer className="flex h-[21px] shrink-0 items-stretch border-b border-t border-[#a0a0a8] bg-[#e1e1e1] leading-[18px]">
        <span className="flex-1 pl-[3px]">Wybór</span>
        <span className="flex w-[95px] items-center border-l border-[#a0a0a8] pl-[2px]">
          <svg width="13" height="16" viewBox="1 0 13 16" aria-hidden className="shrink-0">{deviceBody}</svg>
          <span className="ml-[3px]">0BA8.Standard</span>
        </span>
        <span className="w-[46px] border-l border-[#a0a0a8] pl-[3px]">100%</span>
        <span className="w-[39px] border-l border-[#a0a0a8]" />
      </footer>
    </main>
  )
}

// ─── Desktop ──────────────────────────────────────────────────────────────────
function Wallpaper() {
  return (
    <svg className="absolute inset-0 h-full w-full" viewBox="0 0 1920 1080" preserveAspectRatio="none" aria-hidden>
      <defs>
        <linearGradient id="sky" x1="0" x2="1">
          <stop offset="0" stopColor="#0c1b33" />
          <stop offset=".7" stopColor="#19324e" />
          <stop offset="1" stopColor="#1c3957" />
        </linearGradient>
        <linearGradient id="ground" x1="0" x2="1" y2=".4">
          <stop offset="0" stopColor="#1a2e49" />
          <stop offset=".65" stopColor="#203d5c" />
          <stop offset="1" stopColor="#244563" />
        </linearGradient>
        <linearGradient id="folderFill" x2="1" y2="1">
          <stop offset="0" stopColor="#fff3c0" />
          <stop offset="1" stopColor="#f6c545" />
        </linearGradient>
        <linearGradient id="logoFill" x2="1" y2="1">
          <stop offset="0" stopColor="#1d2f42" />
          <stop offset="1" stopColor="#5b7388" />
        </linearGradient>
      </defs>
      <rect width="1920" height="1080" fill="url(#sky)" />
      <path d="M0 686C500 640 1000 640 1392 683 1600 706 1720 730 1920 741V1080H0z" fill="url(#ground)" />
    </svg>
  )
}

function Brand() {
  return (
    <aside className="flex w-[528px] shrink-0 flex-col justify-end pb-[66px] pl-7">
      <div className="flex items-start">
        <svg width="66" height="47" viewBox="0 0 66 47" className="mt-1 shrink-0" fill="#d9e3ee" aria-hidden>
          <path d="M33 0l31 12c1 .5 1 1 0 1.500L33 26 16 19.500l18-9c1-1 0-2-1-1.800L13 15.500c-3 2-3.500 4-3.500 9.500V44c0 1-1 1.500-2.500 1.500-3 0-5-1-5-2C4 36 5 30 5 22c0-3 .5-5 2-6.500L1.500 13.500c-1-.5-1-1 0-1.500z" />
          <path d="M14 22.500l18 7.500 19.500-7.500.5 17c-3 8-35 8-39 0z" />
        </svg>
        <div className="ml-[22px] font-['Open_Sans'] font-light">
          <p className="text-[44px] leading-[60px] text-[#e6eef6]">zawodowe.edu.pl</p>
          <p className="pl-px text-[20px] leading-7 text-[#8da9c4]">Autor: Bartosz Bryniarski</p>
        </div>
      </div>
    </aside>
  )
}

// ─── Taskbar ──────────────────────────────────────────────────────────────────
const TASK_APPS: { label: string; art: ReactNode }[] = [
  {
    label: 'Widok zadań',
    art: (
      <path d="M5 4v3h9V4M5 20v-3h9v3M5 9.500h9v5H5zM18 4v16M17 9h2v3h-2z" fill="none" stroke="#fff" />
    ),
  },
  {
    label: 'Copilot',
    art: (
      <>
        <path d="M7 2h7c2 0 2 1 2.500 3l-4 1-3 9c-.5 2-2 3-4 3H4c-3 0-3-2-2-5l2-8c1-2 1.500-3 3-3z" fill="#1b8fe8" />
        <path d="M4 12l5-1-1 5c-.5 1.500-1.500 2-3 2-3 0-3-2-1-6z" fill="#f4c430" />
        <path d="M17 22h-7c-2 0-2-1-2.500-3l4-1 3-9c.5-2 2-3 4-3H20c3 0 3 2 2 5l-2 8c-1 2-1.500 3-3 3z" fill="#e6508c" />
        <path d="M14 9c.5-2 2-3 4-3h2c3 0 3 2 2 5l-1 3-8 1z" fill="#a866e8" />
        <path d="M8 19l5-3-2 6c-2 0-2.500-1-3-3z" fill="#f08a3c" />
      </>
    ),
  },
  {
    label: 'Microsoft Edge',
    art: (
      <>
        <path d="M0 12C0 5 5 0 12 0c7 0 12 5 12 10 0 4-3 6-6 6-2 0-4-.5-4-2 1-1 1-2 1-3 0-2-2-4-5-4C5 7 1 9 0 12z" fill="#38c7a8" />
        <path d="M0 12C1 6 6 5 10 6c4 .5 5 3 5 5-1-2-3-3-5-2-5 2-3 11 4 13l-2 2C5 24 0 18 0 12z" fill="#1f87dc" />
        <path d="M8 13c0 5 6 9 14 5-2 4-6 6-10 6-5-1-7-6-4-11z" fill="#1150a0" />
      </>
    ),
  },
  {
    label: 'Eksplorator plików',
    art: (
      <>
        <path d="M1 3h8l2 2h11v5H1z" fill="#e5a50c" />
        <path d="M1 7h22v14H1z" fill="#ffd45e" />
        <path d="M4 13h16v8h-4v-4H8v4H4z" fill="#3a9bea" />
      </>
    ),
  },
  {
    label: 'Microsoft Store',
    art: (
      <>
        <path d="M8 6V3c0-1 1-2 2-2h4c1 0 2 1 2 2v3" fill="none" stroke="#fff" strokeWidth="1.500" />
        <path d="M1 5h22v16c0 1-1 2-2 2H3c-1 0-2-1-2-2z" fill="#fff" />
        <path d="M6 9h5v5H6z" fill="#f25022" />
        <path d="M13 9h5v5h-5z" fill="#7fba00" />
        <path d="M6 15h5v5H6z" fill="#00a4ef" />
        <path d="M13 15h5v5h-5z" fill="#ffb900" />
      </>
    ),
  },
  {
    label: 'Outlook',
    art: (
      <>
        <path d="M3 9L15 1l9 7v12c0 2-1 3-3 3H8z" fill="#2273dd" />
        <path d="M4 10l12-8 3 2L6 13z" fill="#6fc3fb" />
        <path d="M8 14l12-9 4 3-13 10z" fill="#3d9bf2" />
        <path d="M8 23c6-1 12-5 16-12v9c0 2-1 3-3 3z" fill="#48b4f4" />
        <path d="M0 11h10v10H0z" fill="#1561c0" />
        <circle cx="5" cy="16" r="2.500" fill="none" stroke="#fff" strokeWidth="1.500" />
      </>
    ),
  },
]

const TRAY: { label: string; art: ReactNode }[] = [
  { label: 'Pokaż ukryte ikony', art: <path d="M2 11l6-6 6 6" strokeWidth="1.500" /> },
  { label: 'Kamera', art: <path d="M3 4.500h7v7H3zM10 8l3-2v5l-3-2M4 2c2-1.500 5-1.500 7 0M4 14c2 1.500 5 1.500 7 0" /> },
  {
    label: 'Synchronizacja',
    art: (
      <>
        <path d="M8 2H1.500v12H8M8 1.500l6-1v9M6 6c1-2 3-2 4-1M10 10c-1 1-3 1-4 0" />
        <circle cx="12" cy="12.500" r="3.500" fill="#e81123" stroke="none" />
      </>
    ),
  },
  { label: 'Bateria', art: <><path d="M5.500 4.500h9v8h-9zM15.500 7v3M1 3v3h4V3M3 6v6h2M2 1v2M4 1v2" /><path d="M7 6h6v5H7z" fill="#fff" /></> },
  { label: 'Sieć', art: <path d="M4.500 2.500h11v9h-11zM10 11.500v3M6 14.500h7M.5 1.500h4v4h-4zM2.500 5.500v9" /> },
  {
    label: 'Dźwięk wyciszony',
    art: (
      <>
        <path d="M1 6h2l4-4v12l-4-4H1z" />
        <circle cx="12" cy="11" r="4" fill="#d92c3a" stroke="none" />
        <path d="M10.500 9.500l3 3M13.500 9.500l-3 3" />
      </>
    ),
  },
]

function Taskbar() {
  return (
    <footer className="relative flex h-10 shrink-0 bg-[#05090e] font-['Open_Sans'] text-white">
      <button aria-label="Start" className="flex w-12 items-center justify-center">
        <svg width="16" height="16" viewBox="0 0 16 16" fill="#fff" aria-hidden>
          <path d="M0 2l7-1v6.500H0zM8 1l8-1v7.500H8zM0 8.500h7V15l-7-1zM8 8.500h8V16l-8-1z" />
        </svg>
      </button>
      <label className="flex w-[344px] items-center border border-[#c4c4c4] bg-[#f2f2f2] pl-[11px]">
        <svg width="16" height="18" viewBox="0 0 16 18" aria-hidden>
          <circle cx="10" cy="6.500" r="5" fill="none" stroke="#222" strokeWidth="1.500" />
          <path d="M6.500 10.500L1 16" stroke="#222" strokeWidth="1.500" />
        </svg>
        <input
          type="text"
          aria-label="Wyszukaj"
          placeholder="Wpisz tutaj, aby wyszukać"
          className="ml-3 min-w-0 flex-1 bg-transparent text-[14px] outline-none placeholder:text-[#444]"
        />
      </label>
      <div className="flex pr-[2px]">
        {TASK_APPS.map((a) => (
          <button key={a.label} aria-label={a.label} className="flex w-[49px] items-center justify-center">
            <svg width="24" height="24" viewBox="0 0 24 24" aria-hidden>{a.art}</svg>
          </button>
        ))}
      </div>
      <button aria-label="LOGO!Soft Comfort" className="flex w-12 items-center justify-center border-b-2 border-[#76b9ed] bg-[#333a41]">
        <LogoMark size={25} />
      </button>

      <div className="ml-auto flex items-center">
        <button className="flex items-center text-[13px]">
          <svg width="28" height="22" viewBox="0 0 28 22" aria-hidden>
            <path d="M6 20c-7 0-7-8-1-9 1-6 10-7 13-1 6-1 9 9 2 10z" fill="#a9c8f5" />
            <path d="M2 16h22c0 2-1 4-4 4H6c-3 0-4-2-4-4z" fill="#7fa5e8" />
            <circle cx="19" cy="6" r="6" fill="#c42b1c" />
            <text x="19" y="9" fontSize="9" textAnchor="middle" fill="#fff">1</text>
          </svg>
          <span className="ml-[3px]">6°C</span>
          <span className="ml-2">Pochmurnie</span>
        </button>
        <div className="ml-6 flex gap-2">
          {TRAY.map((t) => (
            <button key={t.label} aria-label={t.label}>
              <svg width="16" height="16" viewBox="0 0 16 16" fill="none" stroke="#fff" aria-hidden>{t.art}</svg>
            </button>
          ))}
        </div>
        <div className="ml-[9px] text-center text-[11px] leading-[18px]">
          <div>16:12</div>
          <div>22.10.2026</div>
        </div>
        <button aria-label="Powiadomienia" className="ml-4">
          <svg width="25" height="26" viewBox="0 0 25 26" aria-hidden>
            <path d="M1 2h16v13H8l-4 4v-4H1z" fill="#fff" />
            <path d="M4 5.500h10M4 8.500h10M4 11.500h6" stroke="#05090e" />
            <circle cx="16" cy="17" r="8" fill="#3b3f45" stroke="#9a9a9a" />
            <text x="16" y="21" fontSize="11" textAnchor="middle" fill="#fff">2</text>
          </svg>
        </button>
        <div className="ml-3 mr-1 h-10 w-px bg-[#666]" />
      </div>
    </footer>
  )
}

export default function App() {
  return (
    <div className="relative flex h-screen flex-col overflow-hidden bg-[#19324e] font-['Liberation_Sans',Arial,sans-serif]">
      <Wallpaper />
      <div className="relative flex min-h-0 flex-1">
        <AppWindow />
        <Brand />
      </div>
      <Taskbar />
    </div>
  )
}
